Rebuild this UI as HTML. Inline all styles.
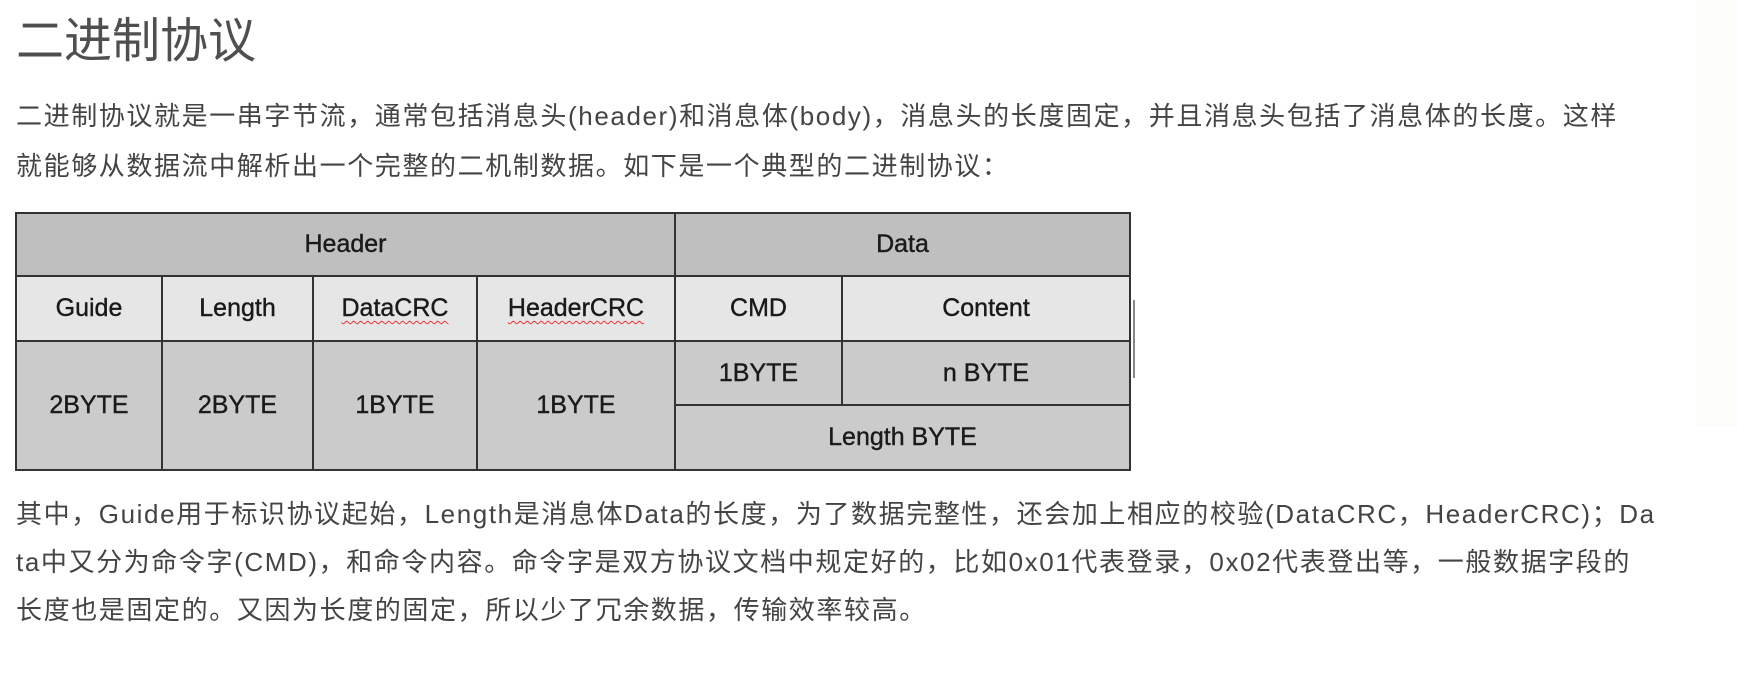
<!DOCTYPE html>
<html><head><meta charset="utf-8"><style>
body{margin:0;width:1737px;height:676px;background:#fff;position:relative;overflow:hidden;font-family:"Liberation Sans","Noto Sans CJK SC",sans-serif;color:#4d4d4d}
.strip{position:absolute;left:1696px;top:0;width:41px;height:426px;background:#fcfcf8}
h1{position:absolute;left:16px;top:12px;margin:0;font-weight:normal;font-size:48px;line-height:60px;color:#4f4f4f}
p{position:absolute;left:16px;margin:0;font-size:26px;letter-spacing:1.6px;width:1680px;color:#444}
.p1{top:91px;line-height:50px}
.p2{top:490px;line-height:48px}
.c{position:absolute;box-sizing:border-box;display:flex;align-items:center;justify-content:center;font-size:25px;color:#1a1a1a;border:2.5px solid #333;-webkit-text-stroke:0.4px #1a1a1a}
.h{background:#bfbfbf}.s{background:#e6e6e6}.d{background:#cbcbcb}
u{text-decoration:underline wavy #e33;text-decoration-thickness:1px;text-underline-offset:4px}
</style></head><body>
<div class="strip"></div>
<h1>二进制协议</h1>
<p class="p1">二进制协议就是一串字节流，通常包括消息头(header)和消息体(body)，消息头的长度固定，并且消息头包括了消息体的长度。这样<br>就能够从数据流中解析出一个完整的二机制数据。如下是一个典型的二进制协议：</p>
<div style="position:absolute;left:15px;top:212px;width:1116px;height:259px;border:2.5px solid #333;box-sizing:border-box"></div>
<div class="c h" style="left:15px;top:212px;width:661px;height:65px">Header</div>
<div class="c h" style="left:674px;top:212px;width:457px;height:65px">Data</div>
<div class="c s" style="left:15px;top:275px;width:148px;height:67px">Guide</div>
<div class="c s" style="left:161px;top:275px;width:153px;height:67px">Length</div>
<div class="c s" style="left:312px;top:275px;width:166px;height:67px"><u>DataCRC</u></div>
<div class="c s" style="left:476px;top:275px;width:200px;height:67px"><u>HeaderCRC</u></div>
<div class="c s" style="left:674px;top:275px;width:169px;height:67px">CMD</div>
<div class="c s" style="left:841px;top:275px;width:290px;height:67px">Content</div>
<div class="c d" style="left:15px;top:340px;width:148px;height:131px">2BYTE</div>
<div class="c d" style="left:161px;top:340px;width:153px;height:131px">2BYTE</div>
<div class="c d" style="left:312px;top:340px;width:166px;height:131px">1BYTE</div>
<div class="c d" style="left:476px;top:340px;width:200px;height:131px">1BYTE</div>
<div class="c d" style="left:674px;top:340px;width:169px;height:66px">1BYTE</div>
<div class="c d" style="left:841px;top:340px;width:290px;height:66px">n BYTE</div>
<div class="c d" style="left:674px;top:404px;width:457px;height:67px">Length BYTE</div>
<div style="position:absolute;left:1133px;top:300px;width:2px;height:78px;background:#888"></div>
<p class="p2">其中，Guide用于标识协议起始，Length是消息体Data的长度，为了数据完整性，还会加上相应的校验(DataCRC，HeaderCRC)；Da<br>ta中又分为命令字(CMD)，和命令内容。命令字是双方协议文档中规定好的，比如0x01代表登录，0x02代表登出等，一般数据字段的<br>长度也是固定的。又因为长度的固定，所以少了冗余数据，传输效率较高。</p>
</body></html>
